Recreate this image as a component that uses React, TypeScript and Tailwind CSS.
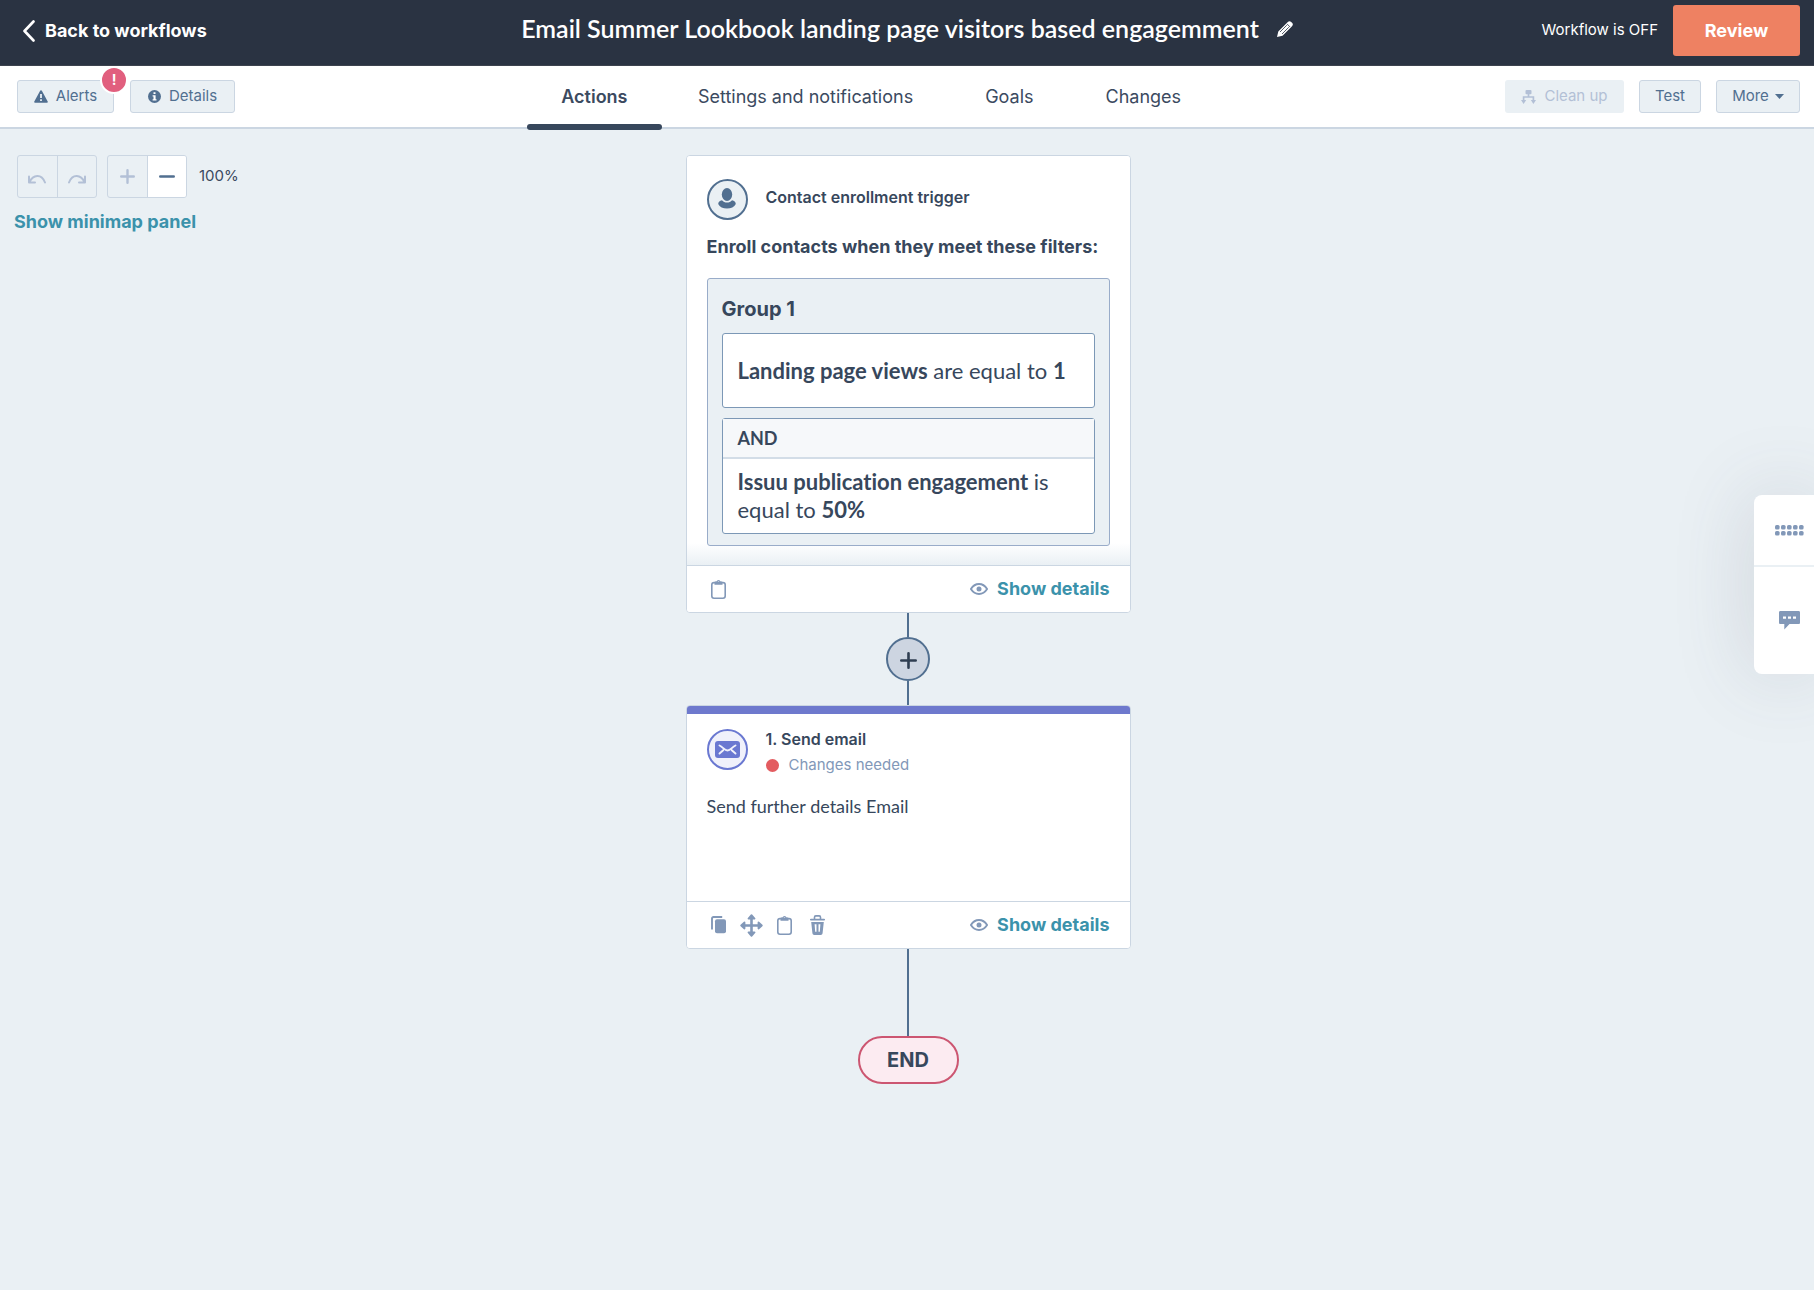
import type { ReactNode } from 'react';

const sans = "font-['Inter','Liberation_Sans',sans-serif]";
const humanist = "font-['Lato','Open_Sans',sans-serif] [font-variant-ligatures:none]";

const toolButton =
  'flex h-[33px] items-center justify-center rounded-[3px] border border-[#cbd6e2] bg-[#eaf0f4] text-[15px] text-[#516f90]';

function AlertIcon() {
  return (
    <svg width="14" height="13" viewBox="0 0 14 13" fill="currentColor">
      <path
        fillRule="evenodd"
        d="M7 0.3c.5 0 .8.2 1 .6l5.700 10.500c.4.7 0 1.300-.8 1.300H1.100c-.8 0-1.200-.6-.8-1.300L6 .9c.2-.4.5-.6 1-.6zM6.100 4v4h1.800V4zM6.100 9.300v1.800h1.800V9.300z"
      />
    </svg>
  );
}

function InfoIcon() {
  return (
    <svg width="13" height="13" viewBox="0 0 13 13">
      <circle cx="6.5" cy="6.5" r="6.500" fill="currentColor" />
      <path d="M5.500 2.200h2v1.700h-2zM4.600 5.200h3v4h.9v1.300H4.600V9.200h.9V6.400h-.9z" fill="#fff" />
    </svg>
  );
}

function CleanUpIcon() {
  return (
    <svg width="15" height="14" viewBox="0 0 15 14" fill="none" stroke="currentColor">
      <rect x="4.500" y="0" width="6" height="4.200" rx="1" fill="currentColor" stroke="none" />
      <path d="M7.500 4v3M2.600 11V7h9.800v4" strokeWidth="1.700" />
      <path d="M0 10h5.200L2.600 14zM9.800 10H15L12.400 14z" fill="currentColor" stroke="none" />
    </svg>
  );
}

function UndoIcon({ flip }: { flip?: boolean }) {
  return (
    <svg
      width="18"
      height="10"
      viewBox="0 0 18 10"
      fill="none"
      stroke="currentColor"
      strokeWidth="2"
      strokeLinecap="round"
      strokeLinejoin="round"
      className={flip ? 'mt-1 -scale-x-100' : 'mt-1'}
    >
      <path d="M1 2.500V8.500H7M1.500 8C5 .5 13.500-.8 17 8.500" />
    </svg>
  );
}

function PencilIcon() {
  return (
    <svg width="16" height="16" viewBox="0 0 16 16">
      <path
        d="M0 16l1.300-5.500L10.800 1a2.400 2.400 0 0 1 3.400 0l.8.8a2.400 2.400 0 0 1 0 3.400L5.500 14.700z"
        fill="#fff"
      />
      <path d="M10 2.900l3.100 3.100M3 11l6.800-6.800M5 13l6.800-6.800" stroke="#2a3342" strokeWidth=".8" />
    </svg>
  );
}

function PersonIcon() {
  return (
    <svg width="18" height="21" viewBox="0 0 18 21" fill="currentColor" className="mb-[3px]">
      <ellipse cx="9" cy="6.500" rx="5.200" ry="6.500" />
      <path d="M4 12.200c1.200 1.500 3 2.400 5 2.400s3.800-.9 5-2.400c2.300.3 3.600 1.700 3.800 3.800C16.300 19 13 20.600 9 20.600S1.700 19 .2 16c.2-2.100 1.500-3.500 3.800-3.800z" />
    </svg>
  );
}

function MailIcon() {
  return (
    <svg width="25" height="17" viewBox="0 0 25 17">
      <rect width="25" height="17" rx="3" fill="#6a78d1" />
      <path
        d="M4.500 4.500c3.500 1.600 5 5 8 5s4.500-3.400 8-5M4.500 12.500l3.700-3.300M20.500 12.500l-3.700-3.300"
        fill="none"
        stroke="#f0f1fb"
        strokeWidth="1.900"
        strokeLinecap="round"
      />
    </svg>
  );
}

function ClipboardIcon() {
  return (
    <svg width="15" height="19" viewBox="0 0 15 19">
      <rect x=".8" y="2.600" width="13.400" height="15.600" rx="2.200" fill="none" stroke="currentColor" strokeWidth="1.600" />
      <path
        fillRule="evenodd"
        d="M3.500 4.800V2.500c0-.6.4-.9 1-.9h.9a2.200 2.200 0 0 1 4.200 0h.9c.6 0 1 .3 1 .9v2.300zM7.500 1.300a.8.8 0 1 0 0 1.600.8.8 0 0 0 0-1.600z"
        fill="currentColor"
      />
    </svg>
  );
}

function EyeIcon() {
  return (
    <svg width="18" height="12" viewBox="0 0 18 12">
      <path
        d="M.9 6C3 2.700 5.700 1 9 1s6 1.700 8.100 5C15 9.300 12.300 11 9 11S3 9.300.9 6z"
        fill="none"
        stroke="currentColor"
        strokeWidth="1.900"
        strokeLinejoin="round"
      />
      <circle cx="9" cy="6" r="2.500" fill="currentColor" />
    </svg>
  );
}

function CopyIcon() {
  return (
    <svg width="15" height="18" viewBox="0 0 15 18">
      <path d="M1 13.500V2.500C1 1.500 1.600 1 2.500 1h8.700" fill="none" stroke="currentColor" strokeWidth="1.900" />
      <rect x="4" y="3.300" width="11" height="14" rx="2" fill="currentColor" />
    </svg>
  );
}

function MoveIcon() {
  return (
    <svg width="23" height="23" viewBox="0 0 23 23" fill="none" stroke="currentColor" strokeWidth="2.600">
      <path d="M11.500 3v17M3 11.500h17" />
      <path
        d="M8.500 4.500l3-3.300 3 3.300zM8.500 18.500l3 3.300 3-3.300zM4.500 8.500l-3.300 3 3.300 3zM18.500 8.500l3.300 3-3.300 3z"
        fill="currentColor"
        strokeWidth="1.800"
        strokeLinejoin="round"
      />
    </svg>
  );
}

function TrashIcon() {
  return (
    <svg width="15" height="20" viewBox="0 0 15 20">
      <path d="M.8 4.700h13.400" stroke="currentColor" strokeWidth="1.700" strokeLinecap="round" />
      <path d="M4.500 4V2.300C4.500 1.400 5 .9 5.800.9h3.400c.8 0 1.300.5 1.300 1.400V4" fill="none" stroke="currentColor" strokeWidth="1.600" />
      <path
        fillRule="evenodd"
        d="M1.200 7h12.600l-1.200 11c-.1 1.200-.8 1.900-2 1.900H4.400c-1.200 0-1.900-.7-2-1.900zM4.600 9.300l.6 7.500h1.300V9.300zM8.500 9.300v7.500h1.300l.6-7.500z"
        fill="currentColor"
      />
    </svg>
  );
}

function ChatIcon() {
  return (
    <svg width="21" height="19" viewBox="0 0 21 19">
      <path
        fillRule="evenodd"
        d="M1.500 0h18c1 0 1.500.5 1.500 1.500v10c0 1-.5 1.500-1.500 1.500h-9L5.300 18.500V13H1.500C.5 13 0 12.500 0 11.500v-10C0 .5.5 0 1.500 0zM4 5.500v2.300h3V5.500zM9 5.500v2.300h3V5.500zM14 5.500v2.300h3V5.500z"
        fill="currentColor"
      />
    </svg>
  );
}

function DotsIcon() {
  return (
    <svg width="29" height="11" viewBox="0 0 29 11" fill="currentColor">
      {[0, 6, 12, 18, 24].map(x => (
        <g key={x}>
          <rect x={x} y="0" width="4.600" height="4.600" rx="1.600" />
          <rect x={x} y="6" width="4.600" height="4.600" rx="1.600" />
        </g>
      ))}
    </svg>
  );
}

function IconButton({ label, children }: { label: string; children: ReactNode }) {
  return (
    <button type="button" aria-label={label} className="flex w-[33px] items-center justify-center">
      {children}
    </button>
  );
}

function CardFooter({ children }: { children: ReactNode }) {
  return (
    <div className="flex h-[47px] items-center justify-between border-t border-[#cbd6e2] bg-white pr-5 pl-[15px] text-[#8298b8]">
      <div className="flex">{children}</div>
      <button type="button" className="flex items-center gap-[9px]">
        <EyeIcon />
        <span className="text-lg leading-6 font-bold text-[#3b92ab]">Show details</span>
      </button>
    </div>
  );
}

function Header() {
  return (
    <header className="grid h-[66px] grid-cols-[1fr_auto_1fr] items-start border-b border-[#3d434e] bg-[#2a3342] px-[14px] pt-[5px] text-white">
      <a href="#workflows" className="flex h-[51px] items-center gap-[10px] pl-[9px] text-lg font-bold">
        <svg width="12" height="22" viewBox="0 0 12 22" fill="none" stroke="#fff" strokeWidth="2.600" strokeLinecap="round" strokeLinejoin="round">
          <path d="M10.500 1.500L1.500 11l9 9.500" />
        </svg>
        Back to workflows
      </a>
      <div className="flex h-12 items-center gap-[18px]">
        <h1 className={`${humanist} text-[25px] font-semibold whitespace-nowrap`}>
          Email Summer Lookbook landing page visitors based engagemment
        </h1>
        <button type="button" aria-label="Edit name">
          <PencilIcon />
        </button>
      </div>
      <div className="flex items-center justify-end gap-[15px]">
        <span className="text-[15px]">Workflow is OFF</span>
        <button type="button" className="h-[51px] w-[127px] rounded-[3px] bg-[#ee8162] text-lg font-bold">
          Review
        </button>
      </div>
    </header>
  );
}

function SubNav() {
  return (
    <div className="flex h-[63px] items-center justify-between border-b-2 border-[#cbd6e2] bg-white pr-[14px] pl-[17px]">
      <div className="flex gap-4">
        <div className="relative">
          <button type="button" className={`${toolButton} w-[97px] gap-2`}>
            <AlertIcon />
            Alerts
          </button>
          <span className="absolute -top-[14px] -right-[14px] flex size-7 items-center justify-center rounded-full border-2 border-white bg-[#e15f7e] text-sm font-bold text-white">
            !
          </span>
        </div>
        <button type="button" className={`${toolButton} w-[105px] gap-2`}>
          <InfoIcon />
          Details
        </button>
      </div>
      <nav className="flex self-stretch text-lg text-[#3b4a5f]">
        <a href="#actions" className="relative flex w-[135px] items-center justify-center font-semibold">
          Actions
          <span className="absolute inset-x-0 -bottom-[3px] h-[6px] rounded-[3px] bg-[#37475c]" />
        </a>
        <a href="#settings" className="flex items-center px-9">
          Settings and notifications
        </a>
        <a href="#goals" className="flex items-center px-9">
          Goals
        </a>
        <a href="#changes" className="flex items-center pr-8 pl-9">
          Changes
        </a>
      </nav>
      <div className="flex gap-[15px]">
        <button
          type="button"
          disabled
          className="flex h-[33px] w-[119px] items-center justify-center gap-2 rounded-[3px] bg-[#eaf0f4] text-[15px] text-[#b3c0d6]"
        >
          <CleanUpIcon />
          Clean up
        </button>
        <button type="button" className={`${toolButton} w-[62px]`}>
          Test
        </button>
        <button type="button" className={`${toolButton} w-[84px] gap-[6px]`}>
          More
          <svg width="9" height="5" viewBox="0 0 9 5" fill="currentColor">
            <path d="M0 0h9L4.500 5z" />
          </svg>
        </button>
      </div>
    </div>
  );
}

function CanvasTools() {
  return (
    <div className="pl-3">
      <div className="flex items-center pl-[3px]">
        <div className="flex h-[43px] w-20 divide-x divide-[#cbd6e2] rounded-[3px] border border-[#cbd6e2] text-[#b3c0d6]">
          <button type="button" aria-label="Undo" disabled className="flex flex-1 items-center justify-center">
            <UndoIcon />
          </button>
          <button type="button" aria-label="Redo" disabled className="flex flex-1 items-center justify-center">
            <UndoIcon flip />
          </button>
        </div>
        <div className="ml-[10px] flex h-[43px] w-20 divide-x divide-[#cbd6e2] overflow-hidden rounded-[3px] border border-[#cbd6e2]">
          <button type="button" aria-label="Zoom in" disabled className="flex flex-1 items-center justify-center text-[#b3c0d6]">
            <svg width="15" height="15" viewBox="0 0 15 15" stroke="currentColor" strokeWidth="2.400" strokeLinecap="round">
              <path d="M7.500 1.200v12.600M1.200 7.500h12.600" />
            </svg>
          </button>
          <button type="button" aria-label="Zoom out" className="flex flex-1 items-center justify-center bg-white text-[#516f90]">
            <svg width="16" height="15" viewBox="0 0 16 15" stroke="currentColor" strokeWidth="2.600" strokeLinecap="round">
              <path d="M1.300 7.500h13.400" />
            </svg>
          </button>
        </div>
        <span className="ml-3 text-[15px] text-[#3b4a5f]">100%</span>
      </div>
      <button type="button" className="mt-[10px] text-lg leading-7 font-bold text-[#3b92ab]">
        Show minimap panel
      </button>
    </div>
  );
}

function TriggerCard() {
  return (
    <section className="w-[445px] overflow-hidden rounded-[4px] border border-[#cbd6e2] bg-white">
      <div className="bg-[linear-gradient(to_top,#eaf0f4,#ffffff_22px)] px-5 pt-[23px] pb-[19px]">
        <div className="flex gap-[18px]">
          <div className="flex size-[41px] items-center justify-center rounded-full border-2 border-[#516f90] bg-[#eaf0f4] text-[#516f90]">
            <PersonIcon />
          </div>
          <h2 className="pt-2 text-base leading-5 font-semibold">Contact enrollment trigger</h2>
        </div>
        <p className="mt-[13px] text-lg leading-7 font-bold whitespace-nowrap">
          Enroll contacts when they meet these filters:
        </p>
        <div className="mt-[17px] rounded-[3px] border border-[#99acc9] bg-[#eaf0f4] px-[14px] pt-4 pb-[11px]">
          <h3 className="text-xl leading-7 font-bold">Group 1</h3>
          <div className={`${humanist} mt-[10px] flex h-[75px] items-center rounded-[3px] border border-[#7c98b6] bg-white px-[15px] text-[22px] leading-7`}>
            <p>
              <b>Landing page views</b> are equal to <b>1</b>
            </p>
          </div>
          <div className={`${humanist} mt-[10px] rounded-[3px] border border-[#7c98b6] bg-white text-[22px] leading-7`}>
            <div className="flex h-10 items-center border-b-2 border-[#d3dde7] bg-[#f6f8fa] px-[15px] text-lg font-bold">AND</div>
            <p className="px-[15px] py-[9px]">
              <b>Issuu publication engagement</b> is equal to <b>50%</b>
            </p>
          </div>
        </div>
      </div>
      <CardFooter>
        <IconButton label="Copy to clipboard">
          <ClipboardIcon />
        </IconButton>
      </CardFooter>
    </section>
  );
}

function EmailCard() {
  return (
    <section className="w-[445px] overflow-hidden rounded-[4px] border border-[#cbd6e2] bg-white">
      <div className="h-2 bg-[#6e79cd]" />
      <div className="h-[187px] px-5 pt-[15px]">
        <div className="flex gap-[18px]">
          <div className="flex size-[41px] items-center justify-center rounded-full border-2 border-[#6a78d1] bg-[#f0f1fb]">
            <MailIcon />
          </div>
          <div className="leading-5">
            <h2 className="text-base leading-5 font-semibold">1. Send email</h2>
            <p className="mt-[6px] flex items-center gap-[10px] text-[15px] leading-5 text-[#8298b8]">
              <span className="size-[13px] rounded-full bg-[#e35c60]" />
              Changes needed
            </p>
          </div>
        </div>
        <p className={`${humanist} mt-[17px] text-lg leading-7`}>Send further details Email</p>
      </div>
      <CardFooter>
        <IconButton label="Clone">
          <CopyIcon />
        </IconButton>
        <IconButton label="Move">
          <MoveIcon />
        </IconButton>
        <IconButton label="Copy to clipboard">
          <ClipboardIcon />
        </IconButton>
        <IconButton label="Delete">
          <TrashIcon />
        </IconButton>
      </CardFooter>
    </section>
  );
}

function SidePanel() {
  return (
    <aside className="absolute top-[366px] right-0 w-[60px] divide-y-2 divide-[#eaf0f4] rounded-l-lg bg-white text-[#8298b8] shadow-[0_0_80px_rgba(70,75,100,0.18)]">
      <button type="button" aria-label="Apps" className="flex h-[72px] w-full items-center justify-end pr-[10px]">
        <DotsIcon />
      </button>
      <button type="button" aria-label="Chat" className="flex h-[107px] w-full items-center justify-end pr-[14px]">
        <ChatIcon />
      </button>
    </aside>
  );
}

export default function App() {
  return (
    <div className={`${sans} flex min-h-screen flex-col overflow-x-hidden bg-[#eaf0f4] text-[#37475c]`}>
      <Header />
      <SubNav />
      <main className="relative grid flex-1 grid-cols-[1fr_auto_1fr] items-start pt-[26px] pl-[2px]">
        <CanvasTools />
        <div className="flex flex-col items-center">
          <TriggerCard />
          <div className="h-6 w-[2px] bg-[#516f90]" />
          <button
            type="button"
            aria-label="Add action"
            className="flex size-11 items-center justify-center rounded-full border-2 border-[#516f90] bg-[#cdd5e1]"
          >
            <svg width="17" height="17" viewBox="0 0 17 17" stroke="#2f3e51" strokeWidth="2.600" strokeLinecap="round" className="mt-[2px]">
              <path d="M8.500 1.300v14.400M1.300 8.500h14.400" />
            </svg>
          </button>
          <div className="h-6 w-[2px] bg-[#516f90]" />
          <EmailCard />
          <div className="h-[87px] w-[2px] bg-[#516f90]" />
          <div className="flex h-12 w-[101px] items-center justify-center rounded-full border-2 border-[#cc5671] bg-[#fcebf1] text-xl font-bold">
            END
          </div>
        </div>
        <SidePanel />
      </main>
    </div>
  );
}
